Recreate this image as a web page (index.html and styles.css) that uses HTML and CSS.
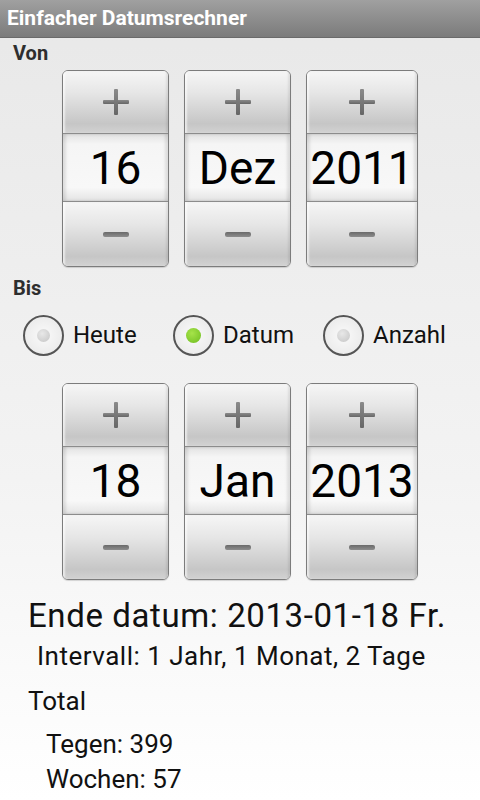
FILE: index.html
```html
<!DOCTYPE html>
<html>
<head>
    <title>Einfacher Datumsrechner</title>
    <link rel="stylesheet" href="styles.css">
</head>
<body>
    <header class="title-bar">Einfacher Datumsrechner</header>
    <main class="content">
        <div class="label">Von</div>
        <div class="picker-row">
            <div class="picker">
                <div class="btn plus"><span class="plus-icon"></span></div>
                <div class="value">16</div>
                <div class="btn minus"><span class="minus-icon"></span></div>
            </div>
            <div class="picker">
                <div class="btn plus"><span class="plus-icon"></span></div>
                <div class="value">Dez</div>
                <div class="btn minus"><span class="minus-icon"></span></div>
            </div>
            <div class="picker wide">
                <div class="btn plus"><span class="plus-icon"></span></div>
                <div class="value">2011</div>
                <div class="btn minus"><span class="minus-icon"></span></div>
            </div>
        </div>

        <div class="label bis">Bis</div>
        <div class="radio-row">
            <label class="radio"><span class="circle"><span class="dot"></span></span>Heute</label>
            <label class="radio"><span class="circle"><span class="dot checked"></span></span>Datum</label>
            <label class="radio"><span class="circle"><span class="dot"></span></span>Anzahl</label>
        </div>

        <div class="picker-row second">
            <div class="picker">
                <div class="btn plus"><span class="plus-icon"></span></div>
                <div class="value">18</div>
                <div class="btn minus"><span class="minus-icon"></span></div>
            </div>
            <div class="picker">
                <div class="btn plus"><span class="plus-icon"></span></div>
                <div class="value">Jan</div>
                <div class="btn minus"><span class="minus-icon"></span></div>
            </div>
            <div class="picker wide">
                <div class="btn plus"><span class="plus-icon"></span></div>
                <div class="value">2013</div>
                <div class="btn minus"><span class="minus-icon"></span></div>
            </div>
        </div>

        <div class="result">
            <div class="end-date">Ende datum: 2013-01-18 Fr.</div>
            <div class="interval">Intervall: 1 Jahr, 1 Monat, 2 Tage</div>
            <div class="total">Total</div>
            <div class="count">Tegen: 399</div>
            <div class="count">Wochen: 57</div>
        </div>
    </main>
</body>
</html>
```

FILE: styles.css
```css
body {
    margin: 0;
    padding: 0;
    font-family: Roboto, 'Noto Sans', sans-serif;
    color: #111;
    background: linear-gradient(#e8e8e8, #f3f3f3 60%, #ffffff);
    min-height: 800px;
    overflow: hidden;
}

.title-bar {
    height: 38px;
    line-height: 37px;
    padding-left: 7px;
    font-size: 21px;
    font-weight: bold;
    color: #fff;
    background: linear-gradient(#a0a0a0, #7b7b7b);
    border-bottom: 1px solid #6a6a6a;
    box-sizing: border-box;
}

.label {
    font-size: 20px;
    font-weight: bold;
    color: #2e2e2e;
    padding-left: 13px;
    height: 32px;
    line-height: 31px;
}

.label.bis {
    height: 40px;
    line-height: 42px;
}

.picker-row {
    display: flex;
    justify-content: center;
    gap: 15px;
}

.picker {
    width: 107px;
    box-sizing: border-box;
    display: flex;
    flex-direction: column;
    border: 1px solid #7c7c7c;
    border-radius: 6px;
    overflow: hidden;
    box-shadow: 0 1px 1px rgba(0, 0, 0, 0.15);
}

.picker.wide {
    width: 112px;
}

.btn {
    display: flex;
    align-items: center;
    justify-content: center;
    background: linear-gradient(#f6f6f6, #e6e6e6 35%, #c6c6c6 85%, #d2d2d2);
    box-shadow: inset 2px 0 2px rgba(255, 255, 255, 0.6), inset -2px 0 2px rgba(0, 0, 0, 0.08);
}

.btn.plus {
    height: 62px;
}

.btn.minus {
    height: 64px;
}

.value {
    height: 67px;
    border-top: 1px solid #8c8c8c;
    border-bottom: 1px solid #8c8c8c;
    background: linear-gradient(#e2e2e2, #f5f5f5 15%, #f8f8f8 80%, #e4e4e4);
    box-shadow: inset 3px 0 3px rgba(0, 0, 0, 0.1), inset -3px 0 3px rgba(0, 0, 0, 0.1);
    display: flex;
    align-items: center;
    justify-content: center;
    font-size: 46px;
    color: #000;
}

.plus-icon {
    position: relative;
    width: 26px;
    height: 26px;
}

.plus-icon::before,
.plus-icon::after {
    content: "";
    position: absolute;
    background: linear-gradient(#8a8a8a, #666);
    border-radius: 1px;
}

.plus-icon::before {
    left: 0;
    top: 11px;
    width: 26px;
    height: 4px;
}

.plus-icon::after {
    left: 11px;
    top: 0;
    width: 4px;
    height: 26px;
}

.minus-icon {
    width: 26px;
    height: 5px;
    border-radius: 2px;
    background: linear-gradient(#6a6a6a, #8d8d8d);
}

.radio-row {
    display: flex;
    height: 56px;
    align-items: center;
    padding-left: 23px;
}

.radio {
    display: flex;
    align-items: center;
    font-size: 24px;
    color: #111;
    width: 150px;
}

.circle {
    width: 37px;
    height: 37px;
    border: 2px solid #555;
    border-radius: 50%;
    background: radial-gradient(circle, #fafafa, #e6e6e6);
    display: flex;
    align-items: center;
    justify-content: center;
    margin-right: 9px;
}

.dot {
    width: 13px;
    height: 13px;
    border-radius: 50%;
    background: radial-gradient(circle at 40% 35%, #e8e8e8, #c4c4c4);
}

.dot.checked {
    width: 15px;
    height: 15px;
    background: radial-gradient(circle at 40% 35%, #a6e34a, #6ebd1f);
}

.picker-row.second {
    margin-top: 20px;
}

.result {
    padding-top: 16px;
}

.end-date {
    font-size: 33px;
    line-height: 40px;
    padding-left: 28px;
    letter-spacing: 0.6px;
}

.interval {
    font-size: 26px;
    line-height: 32px;
    padding-left: 37px;
    margin-top: 4px;
    letter-spacing: 0.5px;
}

.total {
    font-size: 26px;
    line-height: 32px;
    padding-left: 28px;
    margin-top: 13px;
}

.count {
    font-size: 26px;
    line-height: 35px;
    padding-left: 46px;
    margin-top: 10px;
}

.count + .count {
    margin-top: 0;
}
```
